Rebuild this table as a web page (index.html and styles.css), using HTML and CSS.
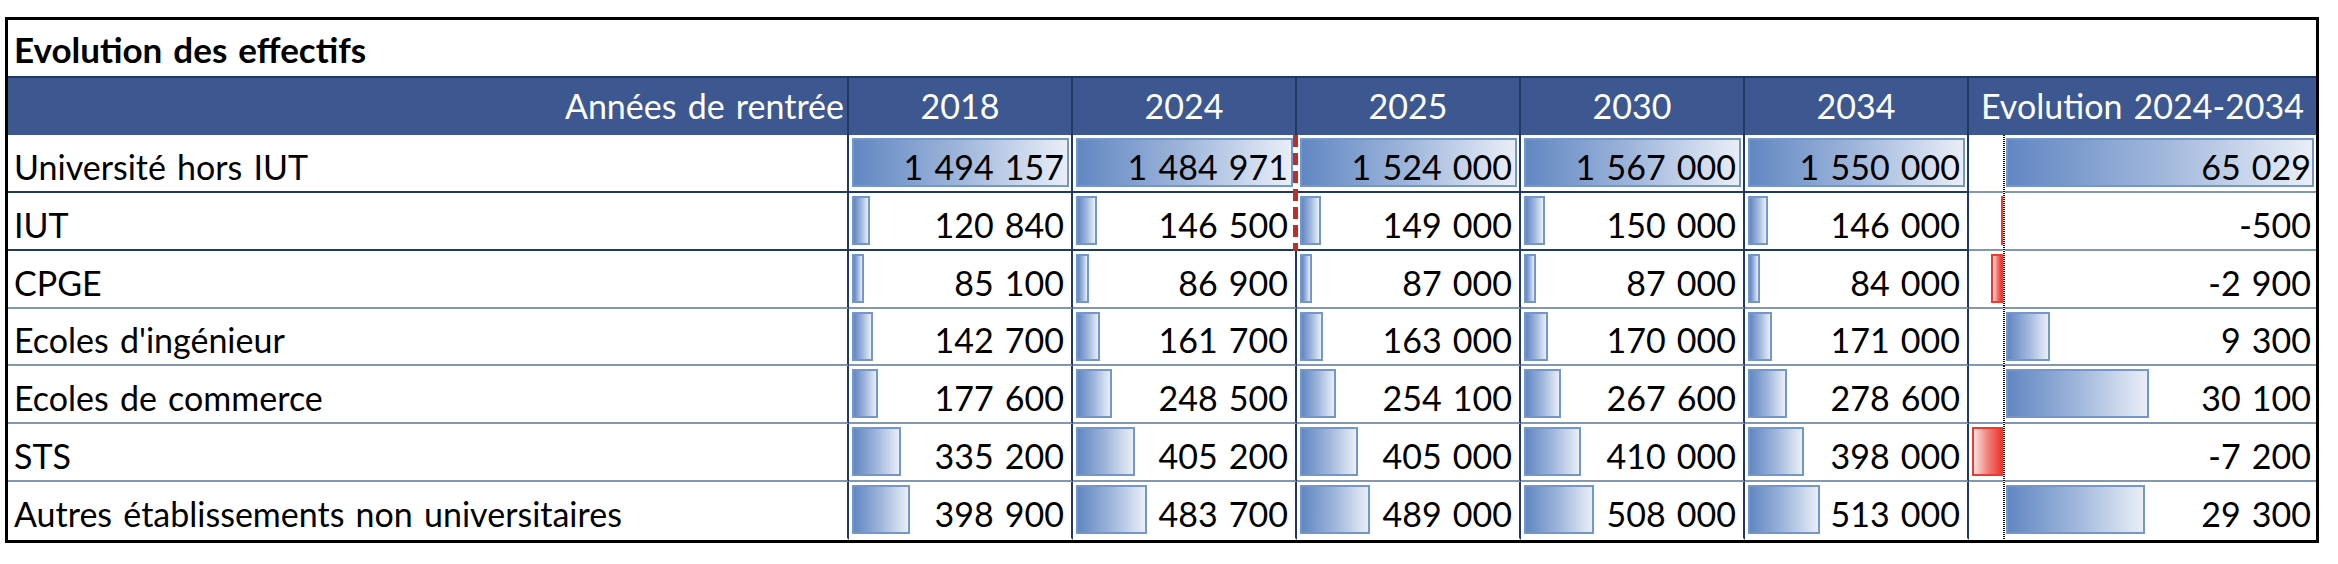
FILE: index.html
```html
<!DOCTYPE html>
<html lang="fr">
<head>
<meta charset="utf-8">
<title>Evolution des effectifs</title>
<link rel="stylesheet" href="styles.css">
</head>
<body>
<div class="frame">
  <div class="title">Evolution des effectifs</div>
  <div class="grid">
    <div class="hd hd-label">Années de rentrée</div>
    <div class="hd">2018</div>
    <div class="hd">2024</div>
    <div class="hd">2025</div>
    <div class="hd">2030</div>
    <div class="hd">2034</div>
    <div class="hd hd-evo">Evolution 2024-2034</div>

    <div class="c lbl strong">Université hors IUT</div>
    <div class="c strong"><span class="bar" style="width:217px"></span><span class="val">1 494 157</span></div>
    <div class="c strong"><span class="bar" style="width:217px"></span><span class="val">1 484 971</span></div>
    <div class="c strong"><span class="bar" style="width:217px"></span><span class="val">1 524 000</span></div>
    <div class="c strong"><span class="bar" style="width:217px"></span><span class="val">1 567 000</span></div>
    <div class="c strong"><span class="bar" style="width:217px"></span><span class="val">1 550 000</span></div>
    <div class="c evo"><span class="axis"></span><span class="bar pos" style="width:308px"></span><span class="val">65 029</span></div>

    <div class="c lbl strong">IUT</div>
    <div class="c strong"><span class="bar" style="width:17.6px"></span><span class="val">120 840</span></div>
    <div class="c strong"><span class="bar" style="width:21.4px"></span><span class="val">146 500</span></div>
    <div class="c strong"><span class="bar" style="width:21.2px"></span><span class="val">149 000</span></div>
    <div class="c strong"><span class="bar" style="width:20.8px"></span><span class="val">150 000</span></div>
    <div class="c strong"><span class="bar" style="width:20.4px"></span><span class="val">146 000</span></div>
    <div class="c evo"><span class="axis"></span><span class="bar neg thin" style="width:2px"></span><span class="val">-500</span></div>

    <div class="c lbl">CPGE</div>
    <div class="c"><span class="bar" style="width:12.4px"></span><span class="val">85 100</span></div>
    <div class="c"><span class="bar" style="width:12.7px"></span><span class="val">86 900</span></div>
    <div class="c"><span class="bar" style="width:12.4px"></span><span class="val">87 000</span></div>
    <div class="c"><span class="bar" style="width:12.1px"></span><span class="val">87 000</span></div>
    <div class="c"><span class="bar" style="width:11.8px"></span><span class="val">84 000</span></div>
    <div class="c evo"><span class="axis"></span><span class="bar neg" style="width:12.5px"></span><span class="val">-2 900</span></div>

    <div class="c lbl">Ecoles d'ingénieur</div>
    <div class="c"><span class="bar" style="width:20.7px"></span><span class="val">142 700</span></div>
    <div class="c"><span class="bar" style="width:23.6px"></span><span class="val">161 700</span></div>
    <div class="c"><span class="bar" style="width:23.2px"></span><span class="val">163 000</span></div>
    <div class="c"><span class="bar" style="width:23.5px"></span><span class="val">170 000</span></div>
    <div class="c"><span class="bar" style="width:23.9px"></span><span class="val">171 000</span></div>
    <div class="c evo"><span class="axis"></span><span class="bar pos" style="width:44px"></span><span class="val">9 300</span></div>

    <div class="c lbl">Ecoles de commerce</div>
    <div class="c"><span class="bar" style="width:25.8px"></span><span class="val">177 600</span></div>
    <div class="c"><span class="bar" style="width:36.3px"></span><span class="val">248 500</span></div>
    <div class="c"><span class="bar" style="width:36.2px"></span><span class="val">254 100</span></div>
    <div class="c"><span class="bar" style="width:37.1px"></span><span class="val">267 600</span></div>
    <div class="c"><span class="bar" style="width:39px"></span><span class="val">278 600</span></div>
    <div class="c evo"><span class="axis"></span><span class="bar pos" style="width:142.6px"></span><span class="val">30 100</span></div>

    <div class="c lbl">STS</div>
    <div class="c"><span class="bar" style="width:48.7px"></span><span class="val">335 200</span></div>
    <div class="c"><span class="bar" style="width:59.2px"></span><span class="val">405 200</span></div>
    <div class="c"><span class="bar" style="width:57.7px"></span><span class="val">405 000</span></div>
    <div class="c"><span class="bar" style="width:56.8px"></span><span class="val">410 000</span></div>
    <div class="c"><span class="bar" style="width:55.7px"></span><span class="val">398 000</span></div>
    <div class="c evo"><span class="axis"></span><span class="bar neg" style="width:31px"></span><span class="val">-7 200</span></div>

    <div class="c lbl last">Autres établissements non universitaires</div>
    <div class="c last"><span class="bar" style="width:57.9px"></span><span class="val">398 900</span></div>
    <div class="c last"><span class="bar" style="width:70.7px"></span><span class="val">483 700</span></div>
    <div class="c last"><span class="bar" style="width:69.6px"></span><span class="val">489 000</span></div>
    <div class="c last"><span class="bar" style="width:70.4px"></span><span class="val">508 000</span></div>
    <div class="c last"><span class="bar" style="width:71.8px"></span><span class="val">513 000</span></div>
    <div class="c evo last"><span class="axis"></span><span class="bar pos" style="width:138.8px"></span><span class="val">29 300</span></div>
  </div>
  <div class="marker"></div>
</div>
</body>
</html>
```

FILE: styles.css
```css
html, body {
  margin: 0;
  padding: 0;
  background: #ffffff;
}

body {
  font-family: "Lato", "Noto Sans", sans-serif;
  font-size: 34px;
  color: #000000;
  word-spacing: 2.5px;
}

.frame {
  position: relative;
  box-sizing: border-box;
  width: 2314px;
  margin: 17px 0 0 5px;
  border: 3px solid #000000;
}

.title {
  box-sizing: border-box;
  height: 56px;
  display: flex;
  align-items: flex-end;
  padding: 0 0 11px 6px;
  font-size: 35px;
  font-weight: 700;
  line-height: 32px;
}

.grid {
  display: grid;
  grid-template-columns: 841px repeat(5, 224px) 1fr;
  grid-template-rows: 59px repeat(7, 57.857px);
}

.hd {
  display: flex;
  align-items: flex-end;
  justify-content: center;
  padding-bottom: 13px;
  line-height: 32px;
  background: #3d5791;
  color: #ffffff;
  border-top: 2px solid #1f3864;
  border-right: 2px solid #1f3864;
  white-space: nowrap;
}

.hd-label {
  justify-content: flex-end;
  padding-right: 3px;
}

.hd-evo {
  border-right: 0;
}

.c {
  position: relative;
  display: flex;
  align-items: flex-end;
  justify-content: flex-end;
  padding: 0 7px 8px 7px;
  line-height: 32px;
  white-space: nowrap;
  border-right: 2px solid #1f3864;
  border-bottom: 2px solid #8497b0;
}

.c.strong {
  border-bottom-color: #1f3864;
}

.c.last {
  border-bottom-color: transparent;
}

.lbl {
  justify-content: flex-start;
  padding-left: 6px;
}

.evo {
  border-right: 0;
  padding-right: 5px;
}

.val {
  position: relative;
  z-index: 1;
}

.bar {
  position: absolute;
  left: 3px;
  top: 3px;
  height: 49px;
  box-sizing: border-box;
  border: 2px solid #7596cb;
  background: linear-gradient(90deg, #6187c2 0%, #9fb6db 50%, #e9eef7 100%);
}

.evo .bar.pos {
  left: 37px;
}

.evo .bar.neg {
  left: auto;
  right: 313px;
  border-color: #ec3a30;
  background: linear-gradient(90deg, #fbe0df 0%, #f27a73 55%, #ec3a30 100%);
}

.evo .bar.thin {
  border-width: 1px;
  background: #ec3a30;
}

.axis {
  position: absolute;
  left: 34px;
  top: 0;
  bottom: -2px;
  width: 2px;
  background: repeating-linear-gradient(180deg, #111111 0 1px, #ffffff 1px 2px);
  z-index: 1;
}

.marker {
  position: absolute;
  left: 1285px;
  top: 115px;
  width: 5px;
  height: 116px;
  background: repeating-linear-gradient(180deg, #bf2e24 0 12px, #ffffff 12px 18px);
  z-index: 2;
}
```
